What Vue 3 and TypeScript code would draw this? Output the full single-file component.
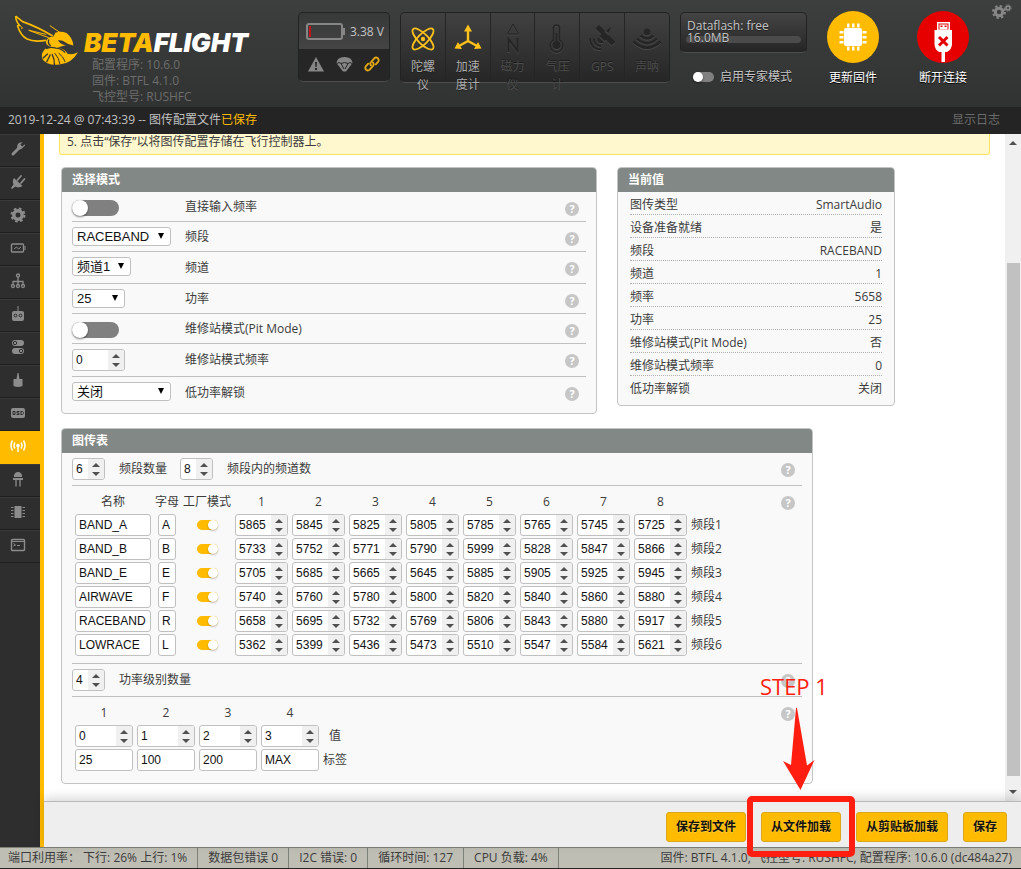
<script setup lang="ts">
import { reactive, ref } from 'vue'

interface Sensor { id: string; label: string; on: boolean }
interface ModeRow { id: string; label: string; kind: 'toggle' | 'select' | 'number'; size: string; value: string; height: string }
interface Band { name: string; letter: string; factory: boolean; freqs: number[] }

const sensors: Sensor[] = [
  { id: 'gyro', label: '陀螺仪', on: true },
  { id: 'accel', label: '加速度计', on: true },
  { id: 'mag', label: '磁力仪', on: false },
  { id: 'baro', label: '气压计', on: false },
  { id: 'gps', label: 'GPS', on: false },
  { id: 'sonar', label: '声呐', on: false },
]

const tabs: string[] = ['setup', 'ports', 'config', 'power', 'failsafe', 'receiver', 'modes', 'motors', 'osd', 'vtx', 'led', 'blackbox', 'cli']
const activeTab = ref('vtx')
const tabNames: Record<string, string> = {
  setup: '设置', ports: '端口', config: '配置', power: '电源', failsafe: '失控保护', receiver: '接收机', modes: '模式',
  motors: '电机', osd: 'OSD', vtx: '图传', led: 'LED', blackbox: '黑匣子', cli: 'CLI',
}

const modeRows = reactive<ModeRow[]>([
  { id: 'direct', label: '直接输入频率', kind: 'toggle', size: '', value: '', height: 'h30' },
  { id: 'band', label: '频段', kind: 'select', size: 'w99', value: 'RACEBAND', height: 'h30' },
  { id: 'channel', label: '频道', kind: 'select', size: 'w59', value: '频道1', height: 'h32' },
  { id: 'powerlevel', label: '功率', kind: 'select', size: 'w53', value: '25', height: 'h30' },
  { id: 'pit', label: '维修站模式(Pit Mode)', kind: 'toggle', size: '', value: '', height: 'h30' },
  { id: 'pitfreq', label: '维修站模式频率', kind: 'number', size: 'w53', value: '0', height: 'h33' },
  { id: 'lowpower', label: '低功率解锁', kind: 'select', size: 'w99', value: '关闭', height: 'h36' },
])

const current: [string, string][] = [
  ['图传类型', 'SmartAudio'], ['设备准备就绪', '是'], ['频段', 'RACEBAND'], ['频道', '1'], ['频率', '5658'],
  ['功率', '25'], ['维修站模式(Pit Mode)', '否'], ['维修站模式频率', '0'], ['低功率解锁', '关闭'],
]

const counts = reactive({ bands: 6, channels: 8, powers: 4 })
const bands = reactive<Band[]>([
  { name: 'BAND_A', letter: 'A', factory: true, freqs: [5865, 5845, 5825, 5805, 5785, 5765, 5745, 5725] },
  { name: 'BAND_B', letter: 'B', factory: true, freqs: [5733, 5752, 5771, 5790, 5999, 5828, 5847, 5866] },
  { name: 'BAND_E', letter: 'E', factory: true, freqs: [5705, 5685, 5665, 5645, 5885, 5905, 5925, 5945] },
  { name: 'AIRWAVE', letter: 'F', factory: true, freqs: [5740, 5760, 5780, 5800, 5820, 5840, 5860, 5880] },
  { name: 'RACEBAND', letter: 'R', factory: true, freqs: [5658, 5695, 5732, 5769, 5806, 5843, 5880, 5917] },
  { name: 'LOWRACE', letter: 'L', factory: true, freqs: [5362, 5399, 5436, 5473, 5510, 5547, 5584, 5621] },
])
const powers = reactive([
  { value: 0, label: '25' }, { value: 1, label: '100' }, { value: 2, label: '200' }, { value: 3, label: 'MAX' },
])
const expert = ref(false)
</script>

<template>
  <div class="app">
    <header class="top">
      <div class="brand">
        <svg class="bee" viewBox="40 42 198 156" aria-hidden="true">
          <g fill="none" stroke="#ffbb00" stroke-linejoin="round">
            <path stroke-width="5" d="M45 47 L66 64 Q112 80 158 108" />
            <path stroke-width="5" d="M45 47 Q46 64 57 76 L51 77 Q60 106 80 117 Q100 127 138 121" />
            <path stroke-width="3" d="M57 74 L66 84 L62 86 M86 91 L146 113 M84 90 L138 103" />
            <path stroke-width="3" d="M149 76 L180 97" />
          </g>
          <path fill="#ffbb00" d="M166 98 Q182 91 200 99 Q218 112 221 137 Q203 133 188 122 L174 120 Q178 132 198 136 Q182 140 172 144 Q196 145 203 162 Q218 166 235 157 Q216 191 178 195 Q138 198 125 176 Q122 157 137 145 Q148 147 156 142 Q140 140 137 127 Q140 113 152 111 L160 109 Z" />
          <g fill="none" stroke="#363736" stroke-width="4">
            <path d="M146 118 Q142 132 152 138 M137 146 Q150 140 168 145 Q184 146 196 158" />
            <path d="M127 176 L143 162 M139 188 L151 164 M163 196 Q164 178 156 163" />
            <path stroke-width="3" d="M180 194 Q178 176 164 160 M196 187 Q190 170 176 160" />
          </g>
        </svg>
        <div class="brand-text">
          <div class="wordmark"><span>BETA</span>FLIGHT</div>
          <p>配置程序: 10.6.0</p>
          <p>固件: BTFL 4.1.0</p>
          <p>飞控型号: RUSHFC</p>
        </div>
      </div>

      <div class="battery">
        <div class="battery-top">
          <svg width="40" height="18" viewBox="0 0 40 18" aria-hidden="true">
            <rect x="1" y="1" width="35" height="15" rx="2" fill="none" stroke="#868686" stroke-width="2" />
            <rect x="37" y="5" width="2" height="7" fill="#868686" />
            <rect x="3" y="3" width="2" height="11" fill="#c4151c" />
          </svg>
          <span>3.38 V</span>
        </div>
        <div class="battery-icons">
          <svg width="16" height="15" viewBox="0 0 16 15" aria-hidden="true">
            <path fill="#868686" d="M8 0 L16 14.5 H0 Z" /><path fill="#262626" d="M7 5 h2 l-.4 5 h-1.2z M7 11 h2 v2 h-2z" />
          </svg>
          <svg width="17" height="15" viewBox="0 0 17 15" aria-hidden="true">
            <path fill="#868686" d="M.5 6 Q1 0 8.500 0 Q16 0 16.500 6 L10 14.500 H7 Z" />
            <path fill="none" stroke="#262626" d="M1 6.500 Q3 4.500 5 6.500 Q8.500 4.500 12 6.500 Q14 4.500 16 6.500 M5 6.500 L8 12 M12 6.500 L9 12" />
          </svg>
          <svg width="16" height="16" viewBox="0 0 16 16" fill="none" stroke="#e1a714" stroke-width="1.900" stroke-linecap="round" aria-hidden="true">
            <path d="M7 9.500 Q5.500 7.500 7.200 5.800 L10.300 2.300 Q12 .8 13.900 2.300 Q15.500 4 14 6 L11.800 8.300" />
            <path d="M9 6.500 Q10.500 8.500 8.800 10.200 L5.700 13.600 Q4 15.200 2.100 13.700 Q.5 12 2 10 L4.200 7.700" />
          </svg>
        </div>
      </div>

      <ul class="sensors">
        <li v-for="s in sensors" :key="s.id" :class="{ on: s.on }">
          <svg width="30" height="30" viewBox="0 0 30 30" fill="none" stroke="currentColor" aria-hidden="true">
            <template v-if="s.id === 'gyro'">
              <ellipse cx="15" cy="15" rx="14" ry="5" stroke-width="1.800" transform="rotate(45 15 15)" />
              <ellipse cx="15" cy="15" rx="14" ry="5" stroke-width="1.800" transform="rotate(-45 15 15)" />
              <circle cx="15" cy="15" r="2.200" fill="currentColor" stroke="none" />
            </template>
            <template v-else-if="s.id === 'accel'">
              <path stroke-width="2.400" d="M15 5 V17 M15 17 L5 22.500 M15 17 L25 22.500" />
              <path fill="currentColor" stroke="none" d="M15 .5 L19 7.500 H11 Z M1.500 24.500 L5 18 L9 25 Z M28.500 24.500 L25 18 L21 25 Z" />
            </template>
            <template v-else-if="s.id === 'mag'">
              <path d="M15 0 L20.500 10 H9.500 Z" /><path stroke-width="2" d="M10.500 28 V15 L19.500 27 V14" />
            </template>
            <template v-else-if="s.id === 'baro'">
              <path stroke-width="1.500" d="M11.500 16 V3.500 Q12 1 14.500 1 Q17 1 17.500 3.500 V16 A6.500 6.500 0 1 1 11.500 16 Z" />
              <circle cx="14.500" cy="21" r="4" fill="currentColor" stroke="none" /><path stroke-width="2" d="M14.500 9 V20" />
            </template>
            <template v-else-if="s.id === 'gps'">
              <path fill="currentColor" stroke="none" d="M12 1 L18 7 L14.500 10.500 L8.500 4.500 Z M22 11.500 L28.500 18 L24.500 21.500 L18.500 15.500 Z M17.500 8 L22 12.500 L17.500 17 L12.500 12 Z M11 13 L17 18.500 Q13 20 11 18 Q9.500 16 11 13Z M19 7 L24 3 L22 9 Z" />
              <path stroke-width="1.800" d="M7 14.500 Q6.500 21.500 14 22 M3 14 Q3 25 14.500 25.500" />
            </template>
            <template v-else>
              <circle cx="15" cy="8" r="3.200" fill="currentColor" stroke="none" />
              <path stroke-width="2.400" d="M8.500 11.500 Q15 17.500 21.500 11.500 M5 14.500 Q15 24 25 14.500 M1.500 17.500 Q15 30 28.500 17.500" />
            </template>
          </svg>
          <span>{{ s.label }}</span>
        </li>
      </ul>

      <div class="flash">
        <div class="flash-box"><p>Dataflash: free 16.0MB</p><i></i></div>
        <label class="expert"><input v-model="expert" class="toggle small" type="checkbox"><span>启用专家模式</span></label>
      </div>

      <div class="actions">
        <button type="button" class="round-button">
          <svg width="52" height="52" viewBox="0 0 52 52" aria-hidden="true">
            <circle cx="26" cy="26" r="26" fill="#ffbb00" />
            <rect x="17" y="17" width="18" height="18" rx="2" fill="#fff" />
            <path stroke="#fff" stroke-width="2.400" d="M21.300 12.500 v4 M26.300 12.500 v4 M31.300 12.500 v4 M21.300 35.500 v4 M26.300 35.500 v4 M31.300 35.500 v4 M12.500 21.300 h4 M12.500 26.300 h4 M12.500 31.300 h4 M35.500 21.300 h4 M35.500 26.300 h4 M35.500 31.300 h4" />
          </svg>
          <span>更新固件</span>
        </button>
        <button type="button" class="round-button">
          <svg width="52" height="52" viewBox="0 0 52 52" aria-hidden="true">
            <circle cx="26" cy="26" r="26" fill="#e60000" />
            <path fill="#fff" d="M20 11 H33 V19 H35 V33 Q35 38 30 41 H28 V51 H24.500 V41 H22 Q17.500 38 17.500 33 V19 H20 Z" />
            <path fill="#e60000" d="M21.500 12.500 H31.500 V18.500 H21.500 Z" /><path fill="#fff" d="M22.500 13.500 H30.500 V18.500 H22.500 Z" />
            <path fill="#e60000" d="M23.500 14.500 h2 v1.500 h-2z M27.500 14.500 h2 v1.500 h-2z" />
            <path stroke="#e60000" stroke-width="3" d="M22 26 L30.500 34.500 M30.500 26 L22 34.500" />
          </svg>
          <span>断开连接</span>
        </button>
      </div>
      <button type="button" class="options" aria-label="选项">
        <svg width="20" height="16" viewBox="0 0 20 16" fill="none" stroke="#868686" aria-hidden="true">
          <circle cx="7" cy="8" r="3.700" stroke-width="3" /><circle cx="7" cy="8" r="6" stroke-width="2" stroke-dasharray="2.400 2.312" />
          <circle cx="16" cy="4" r="1.900" stroke-width="1.600" /><circle cx="16" cy="4" r="3.100" stroke-width="1" stroke-dasharray="1.300 1.134" />
        </svg>
      </button>
    </header>

    <div class="log"><p>2019-12-24 @ 07:43:39 -- 图传配置文件<em>已保存</em></p><a href="#log">显示日志</a></div>

    <div class="body">
      <nav class="tabs">
        <a v-for="t in tabs" :key="t" :href="'#' + t" :class="{ active: t === activeTab }" :aria-label="tabNames[t]" @click.prevent="activeTab = t">
          <svg width="16" height="16" viewBox="0 0 16 16" fill="none" stroke="currentColor" aria-hidden="true">
            <template v-if="t === 'setup'"><path stroke-width="3" stroke-linecap="round" d="M3 13 L9 7" /><path fill="currentColor" stroke="none" d="M15 4.500 L12 7.500 Q9 9.500 7.500 7 Q6.500 4 9 2 Q10.500 1 12.500 1.300 L10.300 3.500 L12.300 5.500 L14.700 3.200 Z" /></template>
            <template v-else-if="t === 'ports'"><path fill="currentColor" stroke="none" d="M4 4 L12.500 12 Q9 14.500 5.500 12.500 L2 15 L1 14 L3.500 10.500 Q2 7 4 4Z" /><path stroke-width="1.800" stroke-linecap="round" d="M7.500 6 L11 2 M11 9 L14.500 5" /></template>
            <template v-else-if="t === 'config'"><circle cx="8" cy="8" r="4.200" stroke-width="3.400" /><circle cx="8" cy="8" r="6.500" stroke-width="2" stroke-dasharray="2.700 2.405" /></template>
            <template v-else-if="t === 'power'"><rect x="1.500" y="4" width="12" height="8" rx="1" stroke-width="1.400" /><path d="M15 6 V10 M4 9 L6.500 7 L8.500 9 L11 7" /></template>
            <template v-else-if="t === 'failsafe'"><g stroke-width="1.300"><circle cx="8" cy="2.500" r="1.500" /><circle cx="3" cy="13" r="1.500" /><circle cx="8" cy="13" r="1.500" /><circle cx="13" cy="13" r="1.500" /><path d="M8 4 V11.500 M3 11.500 V8.500 H13 V11.500" /></g></template>
            <template v-else-if="t === 'receiver'"><path d="M8 0 V6" /><rect x="2" y="5" width="12" height="10" rx="2" fill="currentColor" stroke="none" /><circle cx="5.500" cy="9.500" r="1.400" stroke="#2e2e2e" /><circle cx="10.500" cy="9.500" r="1.400" stroke="#2e2e2e" /></template>
            <template v-else-if="t === 'modes'"><rect x="2" y="1" width="12" height="6" rx="3" fill="currentColor" stroke="none" /><rect x="2" y="9" width="12" height="6" rx="3" fill="currentColor" stroke="none" /><circle cx="5" cy="4" r="1.700" stroke="#2e2e2e" /><circle cx="11" cy="12" r="1.700" stroke="#2e2e2e" /></template>
            <template v-else-if="t === 'motors'"><path fill="currentColor" stroke="none" d="M7.500 1 H8.500 L9.500 7 H12.500 V14 Q8 16 3.500 14 V7 H6.500 Z" /></template>
            <template v-else-if="t === 'osd'"><rect x="1" y="3" width="14" height="10" rx="2" fill="currentColor" stroke="none" /><path stroke="#2e2e2e" d="M3 6.500 h2 v3 h-2z M9.500 6.500 h-2.500 v1.500 h2 v1.500 h-2.500 M11 6 v4 M11 6.500 h1.500 l1 1 v1 l-1 1 H11" /></template>
            <template v-else-if="t === 'vtx'"><circle cx="8" cy="7.500" r="1.800" fill="currentColor" stroke="none" /><path stroke-width="1.500" d="M8 8 V14 M5 4.500 Q3 7.500 5 10.500 M11 4.500 Q13 7.500 11 10.500 M2.500 2.500 Q-.5 7.500 2.500 12.500 M13.500 2.500 Q16.500 7.500 13.500 12.500" /></template>
            <template v-else-if="t === 'led'"><path fill="currentColor" stroke="none" d="M4 6 V4.500 Q4.500 1 8 1 Q11.500 1 12 4.500 V6 Z M3 7 H13 V9 H3 Z" /><path stroke-width="1.300" d="M6 9 V15.500 M10 9 V15.500" /></template>
            <template v-else-if="t === 'blackbox'"><rect x="4.500" y="2" width="7" height="12" fill="currentColor" stroke="none" /><path d="M1 3.500 h2.500 M1 6.500 h2.500 M1 9.500 h2.500 M1 12.500 h2.500 M12.500 3.500 h2.500 M12.500 6.500 h2.500 M12.500 9.500 h2.500 M12.500 12.500 h2.500" /></template>
            <template v-else><rect x="1.500" y="2.500" width="13" height="11" rx="1" stroke-width="1.400" /><path d="M2 4.500 H14 M3.500 6.500 L5.500 8 L3.500 9 M7 8.500 h3" /></template>
          </svg>
        </a>
      </nav>

      <div class="main">
        <div class="scroll">
          <main class="content">
            <p class="note">5. 点击“保存”以将图传配置存储在飞行控制器上。</p>
            <div class="columns">
              <section class="panel mode">
                <h2>选择模式</h2>
                <div class="rows">
                  <div v-for="r in modeRows" :key="r.id" class="row" :class="r.height">
                    <div class="control">
                      <input v-if="r.kind === 'toggle'" :id="r.id" class="toggle" type="checkbox">
                      <span v-else-if="r.kind === 'select'" class="select" :class="r.size">
                        <select :id="r.id" v-model="r.value"><option>{{ r.value }}</option></select>
                      </span>
                      <span v-else class="spin" :class="r.size"><input :id="r.id" v-model="r.value" type="number"><i></i></span>
                    </div>
                    <label :for="r.id">{{ r.label }}</label>
                    <span class="help">?</span>
                  </div>
                </div>
              </section>

              <section class="panel values">
                <h2>当前值</h2>
                <table>
                  <tbody><tr v-for="c in current" :key="c[0]"><td>{{ c[0] }}</td><td>{{ c[1] }}</td></tr></tbody>
                </table>
              </section>
            </div>

            <section class="panel vtxtable">
              <h2>图传表</h2>
              <div class="rows">
                <div class="row h33">
                  <span class="spin w33"><input id="band-count" v-model="counts.bands" type="number"><i></i></span>
                  <label for="band-count">频段数量</label>
                  <span class="spin w33"><input id="channel-count" v-model="counts.channels" type="number"><i></i></span>
                  <label for="channel-count">频段内的频道数</label>
                  <span class="help">?</span>
                </div>
                <div class="block line">
                  <table class="grid">
                    <thead>
                      <tr><th>名称</th><th>字母</th><th>工厂模式</th><th v-for="n in counts.channels" :key="n">{{ n }}</th><th></th></tr>
                    </thead>
                    <tbody>
                      <tr v-for="(b, i) in bands" :key="i">
                        <td><input v-model="b.name" class="text w76" type="text" aria-label="名称"></td>
                        <td><input v-model="b.letter" class="text w18" type="text" aria-label="字母"></td>
                        <td><input v-model="b.factory" class="toggle small" type="checkbox" aria-label="工厂模式"></td>
                        <td v-for="(f, k) in b.freqs" :key="k">
                          <span class="spin w53"><input v-model="b.freqs[k]" type="number" :aria-label="'频道' + (k + 1)"><i></i></span>
                        </td>
                        <td>频段{{ i + 1 }}</td>
                      </tr>
                    </tbody>
                  </table>
                  <span class="help">?</span>
                </div>
                <div class="row h33">
                  <span class="spin w33"><input id="power-count" v-model="counts.powers" type="number"><i></i></span>
                  <label for="power-count">功率级别数量</label>
                  <span class="help">?</span>
                </div>
                <div class="block last">
                  <table class="grid">
                    <thead><tr><th v-for="n in counts.powers" :key="n">{{ n }}</th><th></th></tr></thead>
                    <tbody>
                      <tr>
                        <td v-for="(p, i) in powers" :key="i"><span class="spin w58"><input v-model="p.value" type="number" aria-label="值"><i></i></span></td>
                        <td>值</td>
                      </tr>
                      <tr>
                        <td v-for="(p, i) in powers" :key="i"><input v-model="p.label" class="text w58" type="text" aria-label="标签"></td>
                        <td>标签</td>
                      </tr>
                    </tbody>
                  </table>
                  <span class="help">?</span>
                </div>
              </div>
            </section>
          </main>
          <div class="scrollbar" aria-hidden="true"><b class="up"></b><div class="track"><i></i></div><b class="down"></b></div>
        </div>

        <div class="toolbar">
          <button type="button">保存到文件</button>
          <div class="marked">
            <button type="button">从文件加载</button>
            <div class="frame"></div>
            <svg class="arrow" width="32" height="82" viewBox="0 0 32 82" aria-hidden="true">
              <path fill="#ff1e0f" d="M13 0 H14 L24 57.500 L31.500 52 L17.500 82 L0 53 L8 57 Z" />
            </svg>
            <span class="step">STEP 1</span>
          </div>
          <button type="button">从剪贴板加载</button>
          <button type="button">保存</button>
        </div>
      </div>
    </div>

    <footer class="status">
      <span>端口利用率： 下行: 26% 上行: 1%</span>
      <span>数据包错误 0</span>
      <span>I2C 错误: 0</span>
      <span>循环时间: 127</span>
      <span>CPU 负载: 4%</span>
      <p>固件: BTFL 4.1.0, 飞控型号: RUSHFC, 配置程序: 10.6.0 (dc484a27)</p>
    </footer>
  </div>
</template>

<style>
body { margin: 0; background: #262626; }
</style>

<style scoped>
* { box-sizing: border-box; }
p, h2, ul { margin: 0; padding: 0; }
.app { display: flex; flex-direction: column; height: 100vh; font: 12px/16px "Open Sans", "Noto Sans CJK SC", sans-serif; color: #3c3c3c; overflow: hidden; }
button, input, select { font: inherit; margin: 0; }
button { border: 0; padding: 0; background: none; cursor: pointer; }
svg { display: block; flex: none; }

/* header */
.top { display: flex; flex: none; height: 107px; padding-top: 12px; background: linear-gradient(#3d3f3e, #313332); color: #c4c4c4; }
.brand { display: flex; flex: 1; padding-left: 14px; }
.bee { width: 65px; height: 52px; margin-top: 2px; }
.brand-text { padding: 17px 0 0 5px; color: #6c6d6c; white-space: nowrap; }
.brand-text p { padding-left: 8px; }
.wordmark { color: #fff; font: italic 900 26px/28px Inter, "Liberation Sans", sans-serif; }
.wordmark span { color: #ffbb00; }
.battery { width: 92px; height: 70px; margin-right: 10px; border: 1px solid #222; border-bottom-color: #4c4d4c; border-radius: 5px; background: #262626; overflow: hidden; }
.battery-top { display: flex; align-items: center; justify-content: space-between; height: 36px; padding: 1px 5px 0 7px; background: linear-gradient(#373838, #434443); white-space: nowrap; }
.battery-icons { display: flex; align-items: center; justify-content: space-between; height: 30px; padding: 0 9px; }
.sensors { display: flex; width: 270px; height: 71px; margin-right: 10px; list-style: none; border: 1px solid #222; border-bottom-color: #4c4d4c; border-radius: 5px; background: linear-gradient(#404140, #252625); }
.sensors li { display: flex; flex: 1; flex-direction: column; align-items: center; min-width: 0; padding-top: 11px; color: #252525; border-right: 1px solid #252525; text-align: center; line-height: 18px; }
.sensors li:last-child { border: 0; }
.sensors li span { margin-top: 4px; width: 26px; color: #4c4c4c; text-shadow: 0 -1px #1c1c1c; }
.sensors li svg { filter: drop-shadow(0 1px #484848); }
.sensors li.on svg { color: #ffc21c; filter: none; }
.sensors li.on span { color: #adadad; text-shadow: 0 1px #1c1c1c; }
.flash { width: 128px; }
.flash-box { width: 127px; height: 41px; padding: 7px 6px 0; border: 1px solid #222; border-bottom-color: #4c4d4c; border-radius: 5px; background: linear-gradient(#434443, #242524); }
.flash-box p { position: relative; z-index: 1; width: 100px; line-height: 12px; text-shadow: 0 1px #222; }
.flash-box i { display: block; height: 7px; margin: -8px -1px 0; border-radius: 4px; background: #4b4b4b; }
.expert { display: flex; align-items: center; gap: 6px; margin: 16px 0 0 13px; white-space: nowrap; text-shadow: 0 1px #111; }
.actions { display: flex; }
.round-button { display: flex; flex-direction: column; align-items: center; gap: 7px; width: 90px; height: 76px; margin-top: -1px; color: #fff; text-shadow: 0 1px #000; }
.options { width: 33px; height: 20px; margin-top: -10px; padding-left: 4px; }

.log { display: flex; flex: none; justify-content: space-between; height: 27px; padding: 0 21px 0 8px; line-height: 25px; background: #242424; color: #c0c0c0; }
.log em { font-style: normal; color: #ffbb00; }
.log a { color: #6b6b6b; text-decoration: none; }

/* side tabs */
.body { display: flex; flex: 1; min-height: 0; }
.tabs { flex: none; width: 44px; background: #2e2e2e; border-right: 4px solid #ffbb00; }
.tabs a { display: flex; align-items: center; height: 33px; padding: 0 0 3px 10px; color: #8c8c8c; border-bottom: 1px solid #1e1e1e; border-top: 1px solid #3a3a3a; }
.tabs a.active { background: #ffbb00; color: #fff; border-color: #ffbb00; }

/* content */
.main { display: flex; flex-direction: column; flex: 1; min-width: 0; background: #fff; }
.scroll { display: flex; flex: 1; min-height: 0; }
.content { flex: 1; min-width: 0; padding: 0 15px; overflow: hidden; }
.note { height: 21px; padding-left: 7px; background: #fff7cd; border: 1px solid #ffe55f; border-top: 0; border-radius: 0 0 3px 3px; }
.columns { display: flex; align-items: flex-start; gap: 20px; margin: 12px 2px 14px; }
.panel { border: 1px solid #c4c4c4; border-radius: 4px; background: #f9f9f9; overflow: hidden; }
.panel h2 { height: 24px; padding-left: 10px; background: #828885; color: #fff; font-size: 12px; line-height: 23px; font-weight: 700; }
.mode { flex: 0 1 536px; }
.values { flex: 0 1 278px; }
.vtxtable { max-width: 752px; margin: 0 2px; }
.rows { padding: 0 10px; }
.row { display: flex; align-items: flex-start; padding-top: 5px; border-bottom: 1px solid #c0c0c0; }
.mode .row:last-child { border: 0; }
.h30 { min-height: 30px; } .h32 { min-height: 32px; } .h33 { min-height: 33px; } .h36 { min-height: 36px; }
.control { flex: none; width: 113px; }
.row label { padding-top: 1px; line-height: 18px; }
.mode .row label { flex: 1; }
.mode .h32 label, .mode .h33 label, .mode .h36 label { padding-top: 2px; }
.help { flex: none; width: 14px; height: 14px; margin: 5px 7px 0 auto; border-radius: 50%; background: #c6c6c6; color: #fff; font: 700 11px/14px "Open Sans", sans-serif; text-align: center; }
.vtxtable .row label { padding: 1px 13px 0 14px; line-height: 20px; }

.select { position: relative; display: block; height: 19px; }
.select select { display: block; width: 100%; height: 19px; padding: 0 4px; appearance: none; border: 1px solid #c0c0c0; border-radius: 3px; background: #fff; color: #111; font: 13px/17px "Liberation Sans", "Noto Sans CJK SC", sans-serif; }
.select::after { content: ""; position: absolute; right: 7px; top: 6px; border: solid transparent; border-width: 6px 3px 0; border-top-color: #000; pointer-events: none; }
.spin { display: flex; flex: none; height: 22px; border: 1px solid #c0c0c0; border-radius: 3px; background: #fff; overflow: hidden; }
.spin input { flex: 1; min-width: 0; width: 100%; height: 20px; padding: 0 0 0 3px; border: 0; background: none; color: #111; font: 12px/20px "Liberation Sans", sans-serif; appearance: textfield; }
.spin input::-webkit-inner-spin-button { appearance: none; margin: 0; }
.spin i { display: flex; flex: none; flex-direction: column; justify-content: space-between; align-items: center; width: 16px; height: 20px; padding: 4px 0 3px; background: #f0f0f0; }
.spin i::before, .spin i::after { content: ""; border: solid transparent; }
.spin i::before { border-width: 0 4px 4px; border-bottom-color: #505050; }
.spin i::after { border-width: 4px 4px 0; border-top-color: #505050; }
.text { display: block; height: 22px; margin: 0 auto; padding: 0 3px; border: 1px solid #c0c0c0; border-radius: 3px; background: #fff; color: #111; font: 12px/20px "Liberation Sans", sans-serif; }
.w18 { width: 18px; } .w33 { width: 33px; } .w53 { width: 53px; } .w58 { width: 58px; } .w59 { width: 59px; } .w76 { width: 76px; } .w99 { width: 99px; }

.toggle { display: block; appearance: none; width: 47px; height: 16px; margin-top: 3px; border-radius: 8px; background: #808080; }
.toggle::before { content: ""; display: block; width: 16px; height: 16px; border-radius: 50%; background: #fff; box-shadow: 0 1px 2px rgba(0, 0, 0, .5); }
.toggle.small { width: 21px; height: 10px; margin: 0 auto; border-radius: 5px; }
.toggle.small::before { width: 10px; height: 10px; }
.expert .toggle.small { margin: 0; }
.toggle:checked { background: #ffbb00; }
.toggle:checked::before { margin-left: auto; box-shadow: 0 1px 2px rgba(0, 0, 0, .25); }

.values table { width: 100%; padding: 0 10px 4px; border-spacing: 2px; }
.values td { height: 21px; padding: 2px 0 0; line-height: 18px; vertical-align: top; border-bottom: 1px dotted #b0b0b0; }
.values td:first-child { width: 63%; }
.values td:last-child { text-align: right; }
.values tr:last-child td { border-bottom-color: transparent; }

.block { display: flex; align-items: flex-start; padding-top: 3px; }
.block.line { padding-bottom: 5px; border-bottom: 1px solid #c0c0c0; }
.block.last { padding-bottom: 10px; }
.block .help { margin-top: 7px; }
.grid { border-spacing: 2px; }
.grid th { height: 21px; padding: 0 1px; font-weight: 400; text-align: center; white-space: nowrap; }
.grid td { height: 22px; padding: 0 1px; text-align: center; white-space: nowrap; }

/* scrollbar */
.scrollbar { display: flex; flex: none; flex-direction: column; align-items: center; justify-content: space-between; width: 16px; padding: 7px 0; background: #f0f0f0; }
.scrollbar b { border: solid transparent; }
.scrollbar .up { border-width: 0 4px 4px; border-bottom-color: #505050; }
.scrollbar .down { border-width: 4px 4px 0; border-top-color: #505050; }
.track { display: flex; flex: 1; width: 13px; margin: 6px 0; }
.track i { width: 100%; height: 81%; margin: auto 0 8px; background: #c1c1c1; }

/* footer */
.toolbar { position: relative; z-index: 1; display: flex; flex: none; align-items: flex-start; justify-content: flex-end; gap: 15px; height: 46px; padding: 10px 14px 0 0; border-top: 1px solid #b8b8b8; background: #eee; box-shadow: 0 -3px 10px rgba(0, 0, 0, .16); }
.toolbar button { display: block; height: 30px; padding: 0 9px; border: 1px solid #dba718; border-radius: 3px; background: #ffbb00; color: #111; font-weight: 700; line-height: 28px; white-space: nowrap; text-shadow: 0 1px rgba(255, 255, 255, .25); }
.marked { position: relative; }
.frame { position: absolute; inset: -16px -14px -15px; border: 6px solid #ff1e0f; border-radius: 5px; pointer-events: none; }
.arrow { position: absolute; left: 22px; top: -104px; }
.step { position: absolute; left: -1px; top: -138px; color: #ff1e0f; font-size: 22px; line-height: 24px; white-space: nowrap; }
.status { display: flex; flex: none; height: 22px; line-height: 20px; background: #bfbeb4; border-top: 1px solid #7e8279; border-bottom: 1px solid #262626; white-space: nowrap; }
.status span { padding: 0 10px; border-right: 1px solid #7e8279; }
.status span:first-child { padding-left: 8px; }
.status p { margin-left: auto; padding-right: 9px; }
</style>
